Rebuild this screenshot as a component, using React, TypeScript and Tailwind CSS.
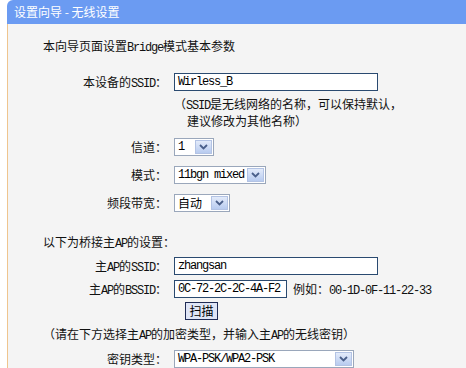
import type { ReactNode } from 'react'

// latin runs in the old bitmap look: narrow fixed-width glyphs
function L({ children }: { children: ReactNode }) {
  return <span className="font-['Liberation_Mono',monospace] text-[12px] leading-none tracking-[-1.2px]">{children}</span>
}

function Arrow() {
  return (
    <div className="w-[17px] h-full border border-[#b3c3e4] bg-gradient-to-b from-[#e3ebfa] to-[#b8cbef] flex items-center justify-center">
      <svg width="9" height="6" viewBox="0 0 9 6">
        <path d="M1 1 L4.5 4.5 L8 1" fill="none" stroke="#4a5f8a" strokeWidth="1.8" />
      </svg>
    </div>
  )
}

function Select({ value, width, latin = true }: { value: string; width: string; latin?: boolean }) {
  return (
    <div className={`${width} h-[18px] border border-[#9aa7bb] bg-white flex items-stretch p-px`}>
      <div className="flex-1 pl-[2px] flex items-center leading-none text-black">
        {latin ? <L>{value}</L> : <span>{value}</span>}
      </div>
      <Arrow />
    </div>
  )
}

function Input({ value, width }: { value: string; width: string }) {
  return (
    <div className={`${width} h-[18px] border border-[#2a4a70] bg-white flex items-center pl-[3px] leading-none text-black`}>
      <L>{value}</L>
    </div>
  )
}

function Row({ label, children, className = '' }: { label: ReactNode; children: ReactNode; className?: string }) {
  return (
    <div className={`flex items-center h-[18px] ${className}`}>
      <div className="w-[159px] text-right whitespace-nowrap">{label}</div>
      <div className="ml-[7px] flex items-center">{children}</div>
    </div>
  )
}

export default function App() {
  return (
    <div className="w-[466px] h-[368px] bg-white overflow-hidden font-['Noto_Sans_CJK_SC',sans-serif] text-[12px] leading-[16px] text-[#111]">
      {/* title bar */}
      <div className="ml-[7px] h-[24px] bg-[#6b9bf2] rounded-tl-[6px] pl-[7px] flex items-center text-white">
        设置向导 - 无线设置
      </div>

      <div className="ml-[7px] h-[344px] border-l border-[#efc58e] bg-[#f4f4f4]">
        <div className="pt-[14px] pl-[35px] h-[30px]">
          本向导页面设置<L>Bridge</L>模式基本参数
        </div>

        <Row label={<>本设备的<L>SSID</L>：</>} className="mt-[19px]">
          <Input value="Wirless_B" width="w-[204px]" />
        </Row>

        <div className="mt-[4px] ml-[166px] leading-[17px]">
          <div className="h-[17px]">（<L>SSID</L>是无线网络的名称，可以保持默认，</div>
          <div className="h-[17px] pl-[13px]">建议修改为其他名称）</div>
        </div>

        <Row label="信道：" className="mt-[9px]">
          <Select value="1" width="w-[40px]" />
        </Row>
        <Row label="模式：" className="mt-[10px]">
          <Select value="11bgn mixed" width="w-[92px]" />
        </Row>
        <Row label="频段带宽：" className="mt-[10px]">
          <Select value="自动" width="w-[56px]" latin={false} />
        </Row>

        <div className="mt-[22px] pl-[35px] h-[16px]">
          以下为桥接主<L>AP</L>的设置：
        </div>

        <Row label={<>主<L>AP</L>的<L>SSID</L>：</>} className="mt-[7px]">
          <Input value="zhangsan" width="w-[204px]" />
        </Row>
        <Row label={<>主<L>AP</L>的<L>BSSID</L>：</>} className="mt-[5px]">
          <Input value="0C-72-2C-2C-4A-F2" width="w-[113px]" />
          <span className="ml-[6px] whitespace-nowrap">
            例如：<L>00-1D-0F-11-22-33</L>
          </span>
        </Row>

        <div className="mt-[4px] ml-[177px]">
          <button className="w-[33px] h-[18px] border border-[#1f2b55] bg-[#dfe5f6] flex items-center justify-center leading-none text-black">
            扫描
          </button>
        </div>

        <div className="mt-[6px] pl-[35px] h-[16px] whitespace-nowrap">
          （请在下方选择主<L>AP</L>的加密类型，并输入主<L>AP</L>的无线密钥）
        </div>

        <Row label="密钥类型：" className="mt-[8px]">
          <Select value="WPA-PSK/WPA2-PSK" width="w-[180px]" />
        </Row>
      </div>
    </div>
  )
}
